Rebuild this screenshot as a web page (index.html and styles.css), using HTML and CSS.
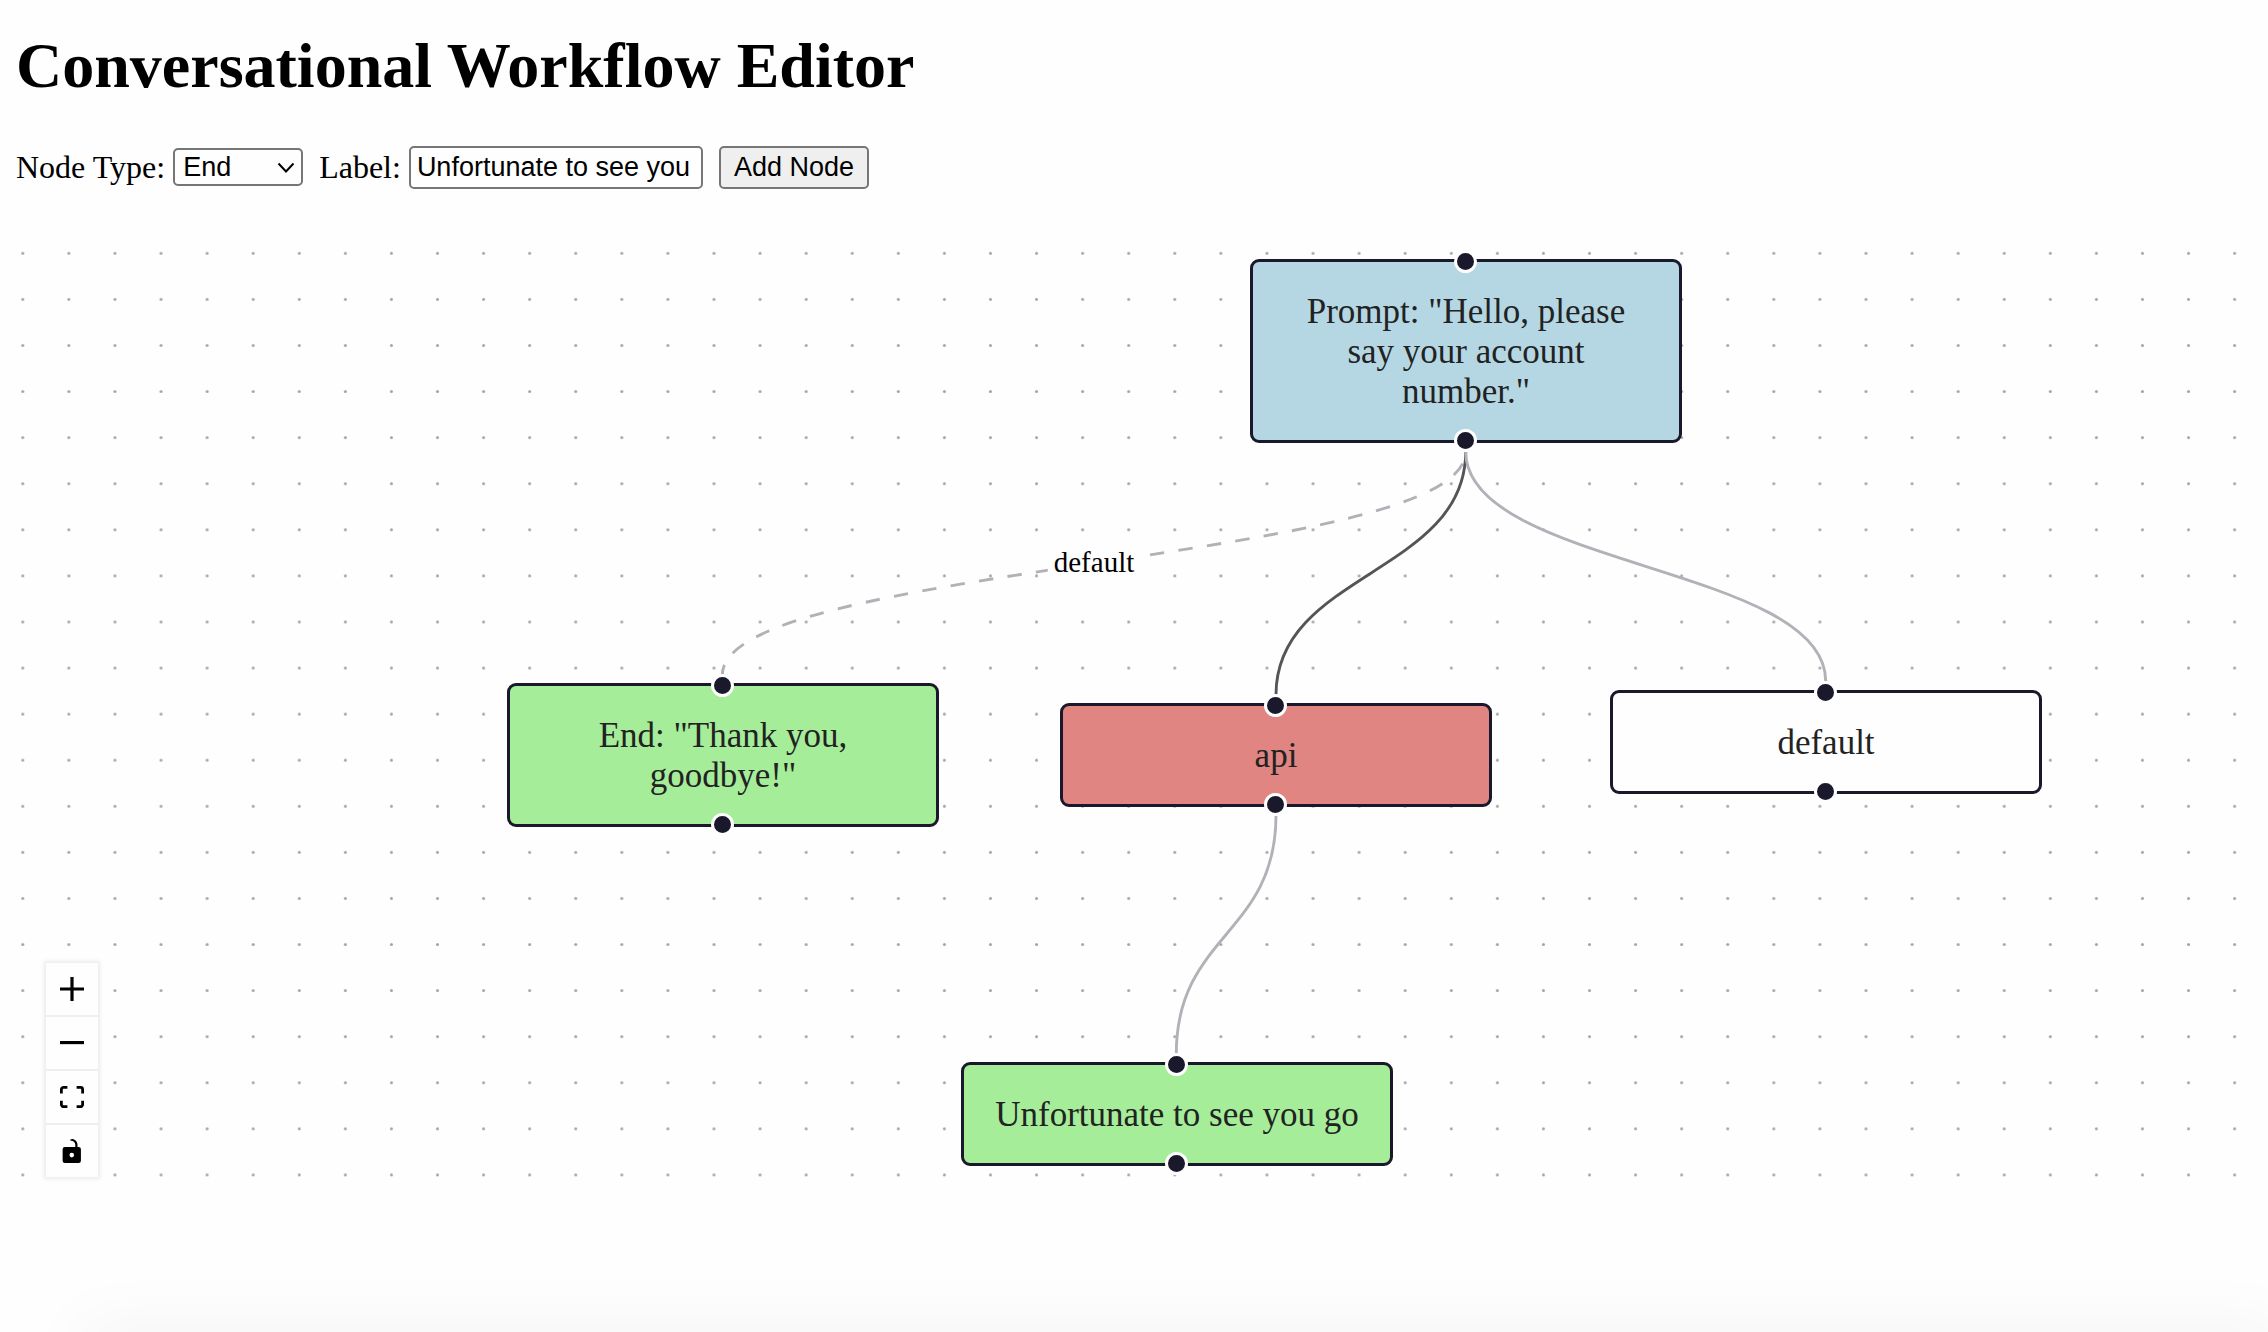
FILE: index.html
```
<!DOCTYPE html>
<html lang="en">
<head>
<meta charset="utf-8">
<meta name="viewport" content="width=device-width, initial-scale=1">
<title>Conversational Workflow Editor</title>
<link rel="stylesheet" href="styles.css">
</head>
<body>
<h1 class="title">Conversational Workflow Editor</h1>
<form class="toolbar">
  <div class="field">
    <label class="field-name" for="node-type">Node Type:</label>
    <span class="select-wrap">
      <select id="node-type" class="control select">
        <option>Prompt</option>
        <option>API</option>
        <option selected>End</option>
      </select>
      <svg class="chevron" viewBox="0 0 18 12" aria-hidden="true"><path d="M1.5 1.5 9 9.5l7.500-8"/></svg>
    </span>
  </div>
  <div class="field">
    <label class="field-name" for="node-label">Label:</label>
    <input id="node-label" class="control input" type="text" value="Unfortunate to see you go">
  </div>
  <button class="control button" type="button">Add Node</button>
</form>

<main class="flow">
  <svg class="layer" aria-hidden="true">
    <defs>
      <pattern id="dots" x="-16.24" y="22.26" width="46.08" height="46.08" patternUnits="userSpaceOnUse">
        <circle class="dot" cx="23.04" cy="23.04" r="1.5"/>
      </pattern>
    </defs>
    <rect y="2" width="100%" height="100%" fill="url(#dots)"/>
    <path class="edge edge-dashed" d="M1449.7 243.7C1449.7 355.3 706.3 355.3 706.3 467"/>
    <path class="edge edge-selected" d="M1449.7 243.7C1449.7 365.2 1260 365.2 1260 486.7"/>
    <path class="edge" d="M1449.7 243.7C1449.7 358.3 1809.7 358.3 1809.7 473"/>
    <path class="edge" d="M1260 607.3C1260 726.5 1160.3 726.5 1160.3 845.7"/>
  </svg>
  <div class="edge-label">default</div>

  <div class="node node-prompt"><i class="handle top"></i>Prompt: "Hello, please say your account number."<i class="handle bottom"></i></div>
  <div class="node node-end"><i class="handle top"></i>End: "Thank you, goodbye!"<i class="handle bottom"></i></div>
  <div class="node node-api"><i class="handle top"></i>api<i class="handle bottom"></i></div>
  <div class="node node-default"><i class="handle top"></i>default<i class="handle bottom"></i></div>
  <div class="node node-unfortunate"><i class="handle top"></i>Unfortunate to see you go<i class="handle bottom"></i></div>

  <div class="controls">
    <button class="tool" type="button" aria-label="Zoom in"><svg viewBox="0 0 32 32"><path d="M32 18.133H18.133V32h-4.266V18.133H0v-4.266h13.867V0h4.266v13.867H32z"/></svg></button>
    <button class="tool" type="button" aria-label="Zoom out"><svg viewBox="0 0 32 5"><path d="M0 0h32v4.200H0z"/></svg></button>
    <button class="tool" type="button" aria-label="Fit view"><svg viewBox="0 0 32 30"><path d="M3.692 4.63c0-.53.4-.938.939-.938h5.215V0H4.708C2.13 0 0 2.054 0 4.63v5.216h3.692V4.631zM27.354 0h-5.2v3.692h5.17c.53 0 .984.4.984.939v5.215H32V4.631A4.624 4.624 0 0027.354 0zm.954 24.83c0 .532-.4.94-.939.94h-5.215v3.768h5.215c2.577 0 4.631-2.13 4.631-4.707v-5.139h-3.692v5.139zm-23.677.94c-.531 0-.939-.4-.939-.94v-5.138H0v5.139c0 2.577 2.13 4.707 4.708 4.707h5.138V25.77H4.631z"/></svg></button>
    <button class="tool" type="button" aria-label="Toggle interactivity"><svg viewBox="0 0 25 32"><path d="M21.333 10.667H19.81V7.619C19.81 3.429 16.38 0 12.19 0c-4.114 1.828-1.37 2.133.305 2.438 1.676.305 4.42 2.59 4.42 5.181v3.048H3.047A3.056 3.056 0 000 13.714v15.238A3.056 3.056 0 003.048 32h18.285a3.056 3.056 0 003.048-3.048V13.714a3.056 3.056 0 00-3.048-3.047zM12.19 24.533a3.056 3.056 0 01-3.047-3.047 3.056 3.056 0 013.047-3.048 3.056 3.056 0 013.048 3.048 3.056 3.056 0 01-3.048 3.047z"/></svg></button>
  </div>
</main>
<div class="bottom-shade"></div>
</body>
</html>
```
FILE: styles.css
```
* {
  box-sizing: border-box;
}

body {
  margin: 0;
  padding: 0 16px;
  min-height: 100vh;
  background: #fefefe;
  color: #000;
  font-family: "Liberation Serif", "Times New Roman", serif;
  font-size: 32px;
  overflow-x: hidden;
}

.title {
  margin: 0;
  padding: 28px 0 43px;
  font-size: 64px;
  line-height: 75px;
}

.toolbar {
  display: flex;
  align-items: center;
  gap: 16px;
  height: 43px;
  margin-bottom: 19px;
}

.field {
  display: flex;
  align-items: center;
  gap: 8px;
  line-height: 36px;
}

.field-name {
  padding-bottom: 2px;
}

.control {
  margin: 0;
  border: 2px solid #767676;
  border-radius: 5px;
  background: #fefefe;
  color: #000;
  font-family: "Liberation Sans", Arial, sans-serif;
  font-size: 27px;
}

.select-wrap {
  position: relative;
  display: flex;
  padding-bottom: 2px;
}

.select {
  width: 130px;
  height: 38px;
  padding: 0 8px;
  appearance: none;
}

.chevron {
  position: absolute;
  top: 14px;
  right: 8px;
  width: 18px;
  height: 12px;
  fill: none;
  stroke: #000;
  stroke-width: 2;
  pointer-events: none;
}

.input {
  width: 294px;
  height: 43px;
  padding: 2px 6px;
}

.button {
  height: 43px;
  padding: 0 13px;
  background: #efefef;
}

.flow {
  position: relative;
  height: 1000px;
  overflow: hidden;
}

.layer {
  position: absolute;
  inset: 0;
  width: 100%;
  height: 100%;
}

.dot {
  fill: #a3a3a3;
}

.edge {
  fill: none;
  stroke: #b1b1b7;
  stroke-width: 2.88;
}

.edge-dashed {
  stroke-dasharray: 14.4;
  stroke-dashoffset: 16.3;
}

.edge-selected {
  stroke: #555;
}

.edge-label {
  position: absolute;
  left: 1078px;
  top: 354px;
  padding: 4px 6px;
  border-radius: 6px;
  background: #fefefe;
  font-size: 29px;
  line-height: 34px;
  transform: translate(-50%, -50%);
}

.node {
  position: absolute;
  width: 432px;
  padding: 30px 29px 28px;
  border: 3px solid #1a192b;
  border-radius: 9px;
  background: #fefefe;
  color: #222;
  font-size: 35px;
  line-height: 40px;
  text-align: center;
}

.node-prompt {
  left: 1234px;
  top: 51px;
  background: #b5d7e4;
}

.node-end {
  left: 491px;
  top: 475px;
  background: #a6ed9a;
}

.node-api {
  left: 1044px;
  top: 495px;
  background: #e08581;
}

.node-default {
  left: 1594px;
  top: 482px;
}

.node-unfortunate {
  left: 945px;
  top: 854px;
  background: #a6ed9a;
}

.handle {
  position: absolute;
  left: 50%;
  width: 23px;
  height: 23px;
  margin-left: -12px;
  border: 3px solid #fefefe;
  border-radius: 50%;
  background: #1a192b;
}

.handle.top {
  top: -12px;
}

.handle.bottom {
  bottom: -12px;
}

.controls {
  position: absolute;
  left: 30px;
  bottom: 31px;
  display: flex;
  flex-direction: column;
  gap: 2px;
  background: #eee;
  box-shadow: 0 0 4px 2px rgba(0, 0, 0, 0.08);
}

.tool {
  display: flex;
  align-items: center;
  justify-content: center;
  width: 52px;
  height: 52px;
  padding: 0;
  border: 0;
  background: #fefefe;
}

.tool svg {
  width: 24px;
  max-height: 24px;
}

.bottom-shade {
  position: fixed;
  right: 0;
  bottom: -1px;
  left: 100px;
  height: 1px;
  box-shadow: 0 20px 70px 20px rgba(0, 0, 0, 0.06);
}
```
